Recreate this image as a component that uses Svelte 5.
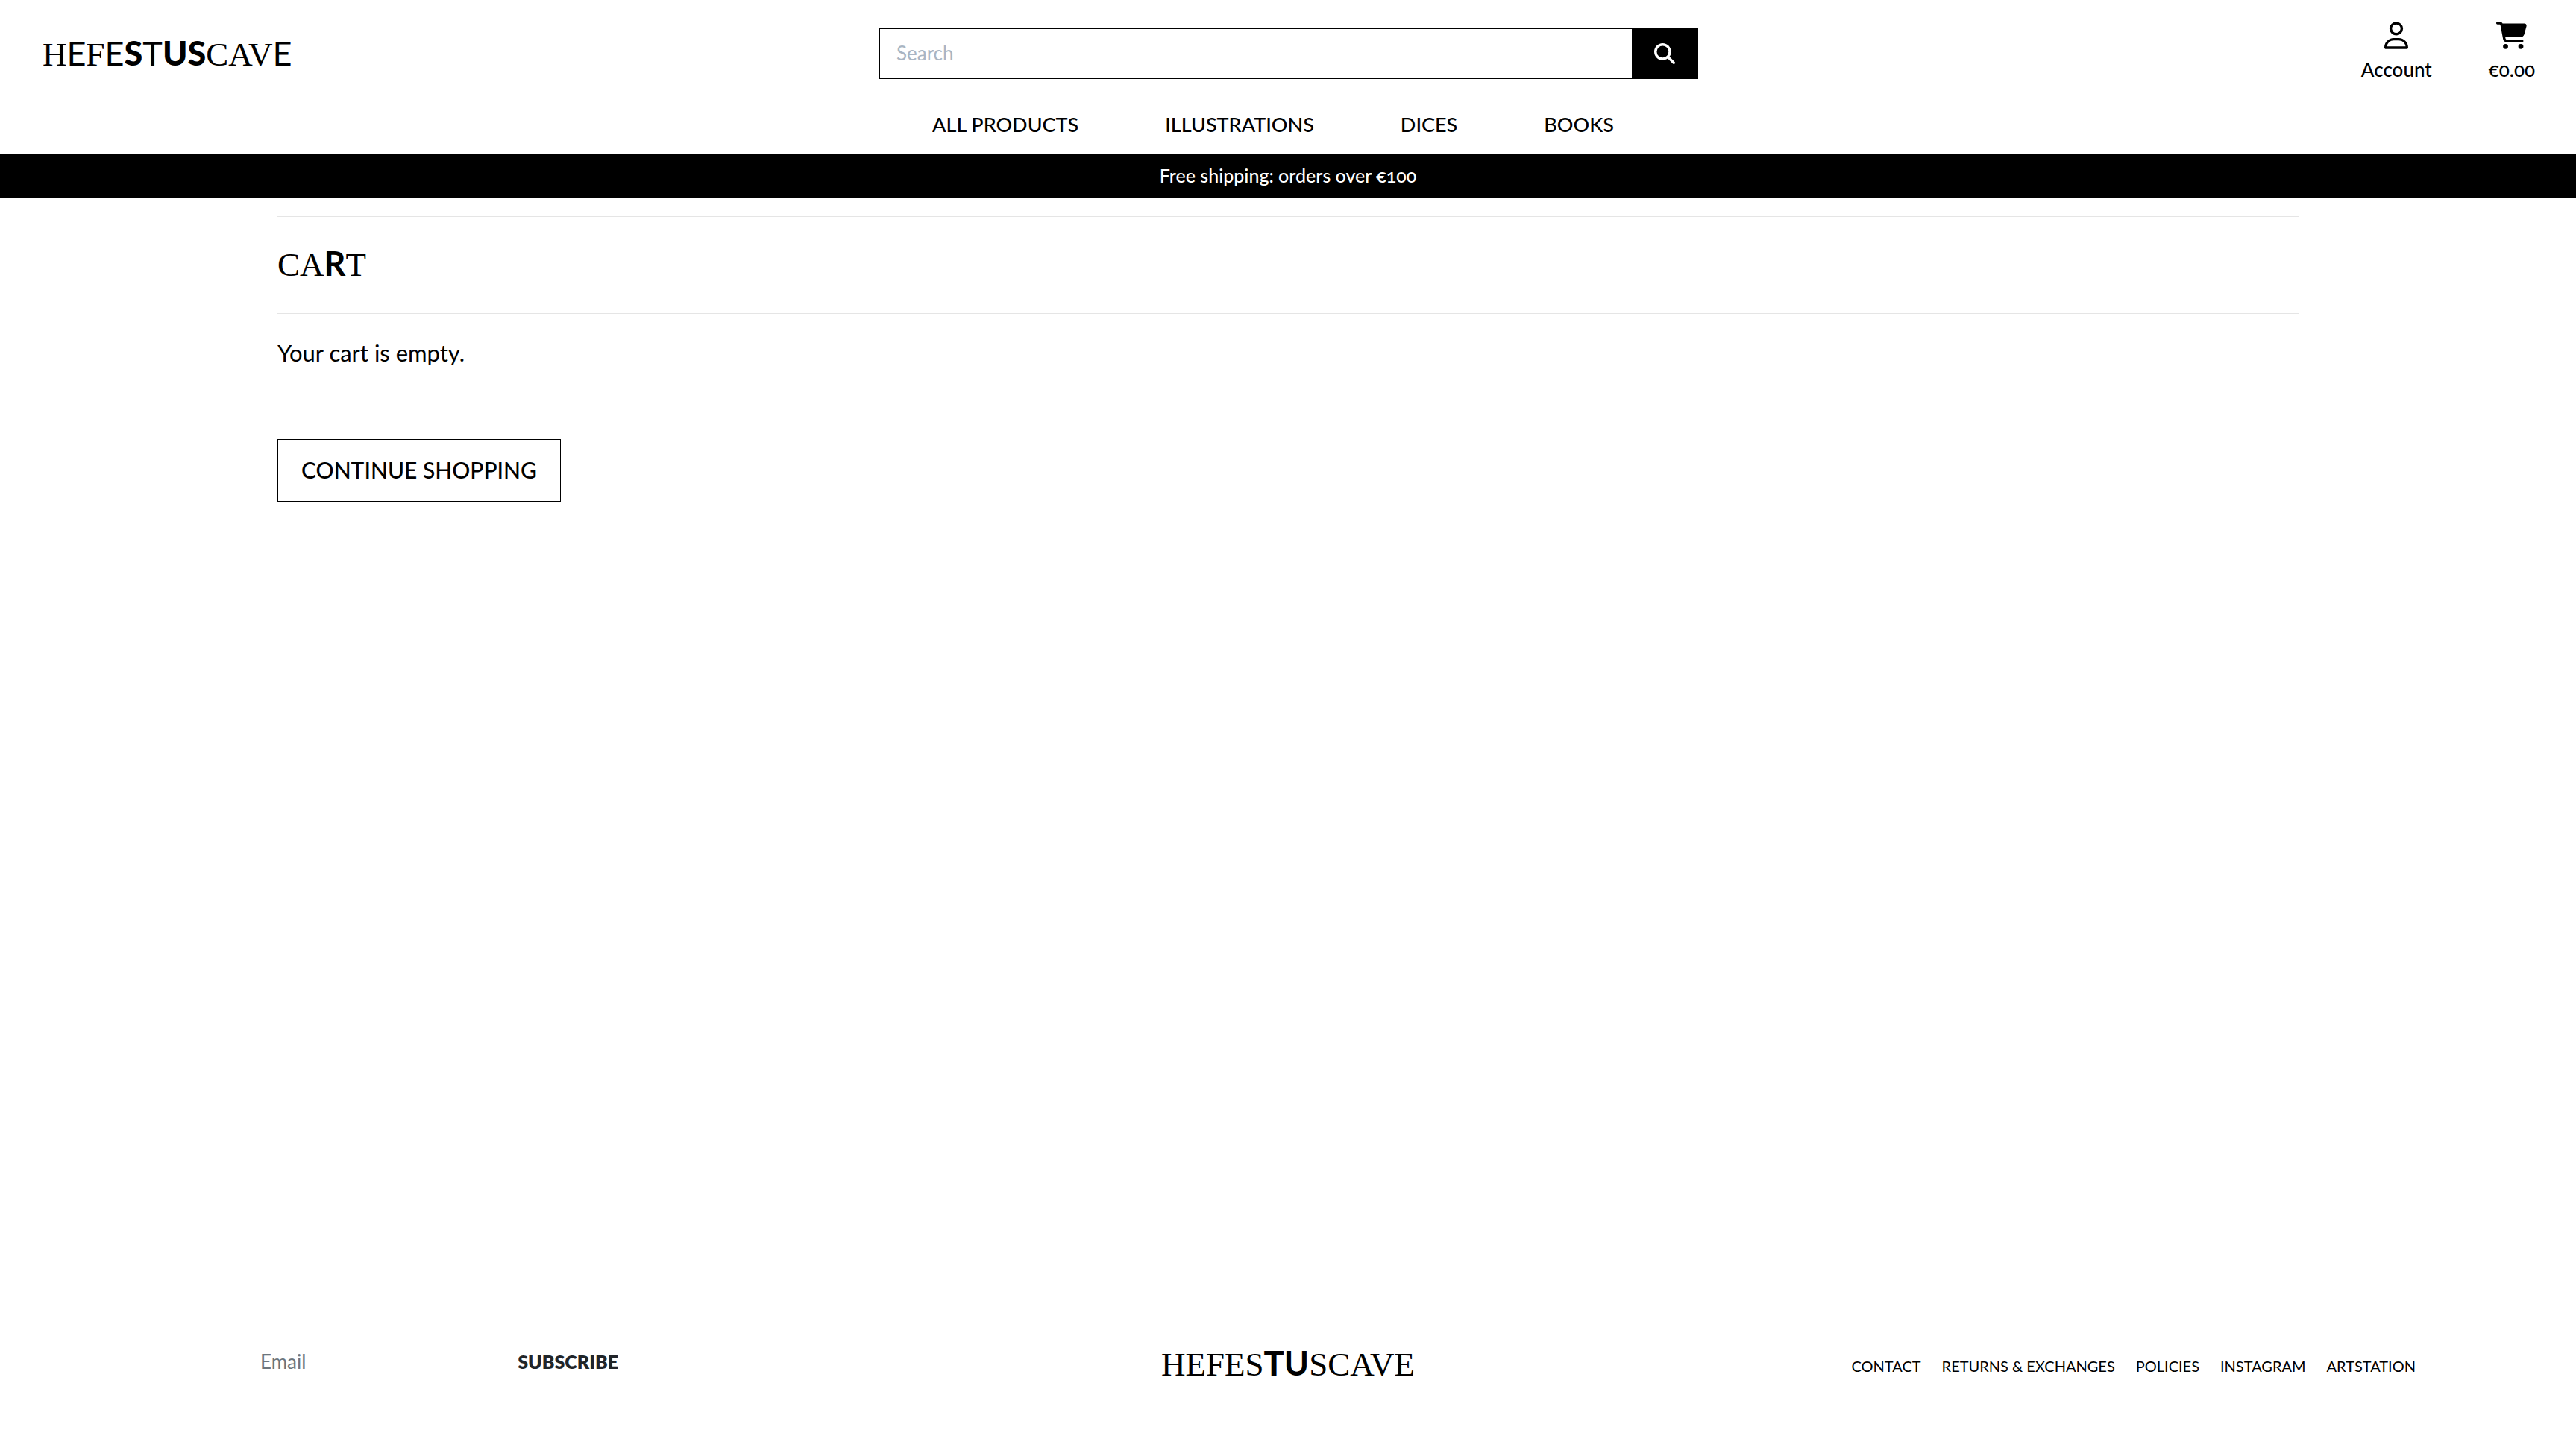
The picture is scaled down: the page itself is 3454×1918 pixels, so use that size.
<script lang="ts">
  type Style = 'thin' | 'serif' | 'bold' | 'heavy';
  type Letter = { char: string; style: Style };

  const spell = (word: string, styles: Style[]): Letter[] =>
    [...word].map((char, i) => ({ char, style: styles[i] }));

  const headerLogo = spell('HEFESTUSCAVE', [
    'serif', 'thin', 'serif', 'thin', 'heavy', 'thin',
    'heavy', 'heavy', 'serif', 'serif', 'serif', 'thin'
  ]);
  const footerLogo = spell('HEFESTUSCAVE', [
    'serif', 'serif', 'serif', 'serif', 'serif', 'heavy',
    'bold', 'serif', 'serif', 'serif', 'serif', 'serif'
  ]);
  const cartTitle = spell('CART', ['serif', 'serif', 'bold', 'serif']);

  const categories = ['All products', 'Illustrations', 'Dices', 'Books'];
  const footerLinks = ['Contact', 'Returns & Exchanges', 'Policies', 'Instagram', 'Artstation'];

  let query = $state('');
  let email = $state('');
</script>

{#snippet display(letters: Letter[])}{#each letters as l}<span class={l.style}>{l.char}</span>{/each}{/snippet}

<div class="page">
  <header>
    <div class="top">
      <a class="logo" href="/" aria-label="HEFESTUSCAVE">{@render display(headerLogo)}</a>

      <form class="search" role="search" onsubmit={(e) => e.preventDefault()}>
        <input type="search" placeholder="Search" aria-label="Search" bind:value={query} />
        <button type="submit" aria-label="Submit search">
          <svg viewBox="0 0 512 512" width="28" height="28" fill="currentColor" aria-hidden="true">
            <path d="M416 208c0 45.900-14.900 88.300-40 122.700L502.600 457.400c12.500 12.500 12.500 32.800 0 45.300s-32.800 12.500-45.300 0L330.700 376c-34.400 25.200-76.800 40-122.700 40C93.100 416 0 322.900 0 208S93.100 0 208 0S416 93.100 416 208zM208 352a144 144 0 1 0 0-288 144 144 0 1 0 0 288z" />
          </svg>
        </button>
      </form>

      <div class="actions">
        <a href="/account">
          <svg viewBox="0 0 448 512" width="32" height="37" fill="currentColor" aria-hidden="true">
            <path d="M304 128a80 80 0 1 0-160 0 80 80 0 1 0 160 0zM96 128a128 128 0 1 1 256 0A128 128 0 1 1 96 128zM49.300 464H398.700c-8.900-63.300-63.300-112-129-112H178.300c-65.700 0-120.100 48.700-129 112zM0 482.300C0 383.800 79.800 304 178.300 304h91.400C368.200 304 448 383.800 448 482.300c0 16.400-13.300 29.700-29.700 29.700H29.700C13.300 512 0 498.700 0 482.300z" />
          </svg>
          <span>Account</span>
        </a>
        <a href="/cart" aria-label="Cart, €0.00">
          <svg viewBox="0 0 576 512" width="41" height="37" fill="currentColor" aria-hidden="true">
            <path d="M0 24C0 10.700 10.700 0 24 0H69.500c22 0 41.500 12.800 50.600 32h411c26.300 0 45.500 25 38.600 50.400l-41 152.300c-8.500 31.400-37 53.300-69.500 53.300H170.700l5.400 28.500c2.200 11.300 12.100 19.500 23.600 19.500H488c13.300 0 24 10.700 24 24s-10.700 24-24 24H199.700c-34.600 0-64.300-24.600-70.700-58.500L77.400 54.500c-.7-3.800-4-6.500-7.900-6.500H24C10.700 48 0 37.300 0 24zM128 464a48 48 0 1 1 96 0 48 48 0 1 1-96 0zm336-48a48 48 0 1 1 0 96 48 48 0 1 1 0-96z" />
          </svg>
          <span>€0.00</span>
        </a>
      </div>
    </div>

    <nav class="categories" aria-label="Categories">
      {#each categories as item}
        <a href="/products">{item}</a>
      {/each}
    </nav>
  </header>

  <p class="banner">Free shipping: orders over €100</p>

  <main>
    <h1 aria-label="CART">{@render display(cartTitle)}</h1>
    <p class="empty">Your cart is empty.</p>
    <a class="continue" href="/products">Continue shopping</a>
  </main>

  <footer>
    <form class="newsletter" onsubmit={(e) => e.preventDefault()}>
      <input type="email" placeholder="Email" aria-label="Email" bind:value={email} />
      <button type="submit">Subscribe</button>
    </form>
    <a class="logo" href="/" aria-label="HEFESTUSCAVE">{@render display(footerLogo)}</a>
    <nav class="links" aria-label="Footer">
      {#each footerLinks as item}
        <a href="/info">{item}</a>
      {/each}
    </nav>
  </footer>
</div>

<style>
  :global(body) {
    background: #fff;
  }

  .page {
    display: flex;
    flex-direction: column;
    min-height: 100vh;
    color: #000;
    font-family: Lato, 'Open Sans', sans-serif;
    font-variant-numeric: oldstyle-nums;
  }

  .page * {
    box-sizing: border-box;
  }

  a {
    color: inherit;
    text-decoration: none;
  }

  input,
  button {
    margin: 0;
    border: 0;
    border-radius: 0;
    background: none;
    font: inherit;
    appearance: none;
    outline: none;
  }

  button {
    cursor: pointer;
  }

  .logo,
  h1 {
    margin: 0;
    font-family: 'Liberation Serif', serif;
    font-size: 45px;
    font-weight: 400;
    line-height: 56px;
    white-space: nowrap;
  }

  .thin {
    font-family: Lato, sans-serif;
    font-weight: 400;
  }

  .serif {
    font-family: 'Liberation Serif', serif;
  }

  .bold {
    font-family: Lato, sans-serif;
    font-weight: 700;
  }

  .heavy {
    font-family: Lato, sans-serif;
    font-weight: 900;
  }

  .top {
    display: grid;
    grid-template-columns: 1fr minmax(0, 1098px) 1fr;
    align-items: center;
    height: 144px;
    padding: 0 55px 0 57px;
  }

  .search {
    display: flex;
    height: 68px;
    border: 1px solid #000;
  }

  .search input {
    flex: 1;
    min-width: 0;
    padding: 0 22px 2px;
    font-size: 26px;
  }

  .search input::placeholder {
    color: #a9b5c3;
    opacity: 1;
  }

  .search button {
    display: grid;
    place-items: center;
    width: 88px;
    background: #000;
    color: #fff;
  }

  .actions {
    display: flex;
    justify-content: flex-end;
    gap: 76px;
    padding-bottom: 8px;
    font-size: 26px;
    font-weight: 500;
    line-height: 30px;
  }

  .actions a {
    display: flex;
    flex-direction: column;
    align-items: center;
    gap: 12px;
  }

  .categories {
    display: flex;
    justify-content: center;
    gap: 116px;
    height: 63px;
    padding: 6px 40px 0 0;
    font-size: 27px;
    font-weight: 500;
    line-height: 34px;
    text-transform: uppercase;
  }

  .banner {
    height: 58px;
    margin: 0;
    background: #000;
    color: #fff;
    font-size: 25px;
    font-weight: 500;
    line-height: 56px;
    text-align: center;
  }

  main {
    flex: 1;
    width: 100%;
    max-width: 2710px;
    margin: 25px auto 0;
  }

  h1 {
    padding: 34px 0 37px;
    border: solid #e5e5e5;
    border-width: 1px 0;
  }

  .empty {
    margin: 30px 0 94px;
    font-size: 31px;
    line-height: 44px;
  }

  .continue {
    display: inline-block;
    padding: 0 31px 2px;
    border: 1px solid #000;
    font-size: 30px;
    font-weight: 500;
    line-height: 80px;
    text-transform: uppercase;
  }

  footer {
    display: grid;
    grid-template-columns: 1fr auto 1fr;
    align-items: center;
    padding: 0 215px 56px;
  }

  .newsletter {
    display: flex;
    width: 550px;
    height: 72px;
    margin-left: 86px;
    border-bottom: 1px solid #000;
  }

  .newsletter input {
    flex: 1;
    min-width: 0;
    padding: 0 0 0 48px;
    font-size: 26px;
  }

  .newsletter input::placeholder {
    color: #6c757d;
    opacity: 1;
  }

  .newsletter button {
    padding: 0 22px;
    color: #212529;
    font-size: 25px;
    font-weight: 800;
    text-transform: uppercase;
  }

  footer .logo {
    padding-top: 6px;
  }

  .links {
    display: flex;
    justify-content: flex-end;
    gap: 28px;
    padding-top: 12px;
    font-size: 20px;
    line-height: 28px;
    text-transform: uppercase;
    white-space: nowrap;
  }
</style>
